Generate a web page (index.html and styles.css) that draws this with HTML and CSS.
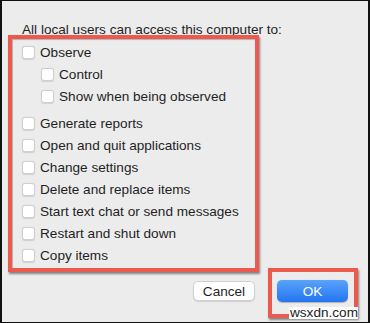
FILE: index.html
```html
<!DOCTYPE html>
<html>
<head>
<meta charset="utf-8">
<link rel="stylesheet" href="styles.css">
</head>
<body>
<div class="frame">
  <div class="heading">All local users can access this computer to:</div>
  <div class="list">
    <div class="row"><span class="box"></span><span>Observe</span></div>
    <div class="row sub"><span class="box"></span><span>Control</span></div>
    <div class="row sub"><span class="box"></span><span>Show when being observed</span></div>
    <div class="group">
      <div class="row"><span class="box"></span><span>Generate reports</span></div>
      <div class="row"><span class="box"></span><span>Open and quit applications</span></div>
      <div class="row"><span class="box"></span><span>Change settings</span></div>
      <div class="row"><span class="box"></span><span>Delete and replace items</span></div>
      <div class="row"><span class="box"></span><span>Start text chat or send messages</span></div>
      <div class="row"><span class="box"></span><span>Restart and shut down</span></div>
      <div class="row"><span class="box"></span><span>Copy items</span></div>
    </div>
  </div>
  <div class="buttons">
    <button class="btn cancel">Cancel</button>
    <div class="ok-mark"><button class="btn ok">OK</button></div>
  </div>
  <div class="watermark">wsxdn.com</div>
</div>
</body>
</html>
```
FILE: styles.css
```css
html, body {
  margin: 0;
  padding: 0;
}
body {
  width: 370px;
  height: 323px;
  overflow: hidden;
  font-family: "Liberation Sans", Arial, sans-serif;
  font-size: 13.6px;
  color: #1f1f1f;
}
.frame {
  position: relative;
  box-sizing: border-box;
  width: 370px;
  height: 323px;
  background: #ececec;
  border-style: solid;
  border-color: #111;
  border-width: 1px 2px 1px 2px;
  padding: 23px 10px 0 6px;
  display: flex;
  flex-direction: column;
}
.heading {
  line-height: 11px;
  height: 11px;
  padding-left: 14px;
  white-space: nowrap;
}
.list {
  box-sizing: border-box;
  width: 251px;
  margin-left: 0;
  border: 4px solid #ea5a4f;
  box-shadow: 1px 2px 2px rgba(0,0,0,0.45), inset 1px 1px 1px rgba(0,0,0,0.25);
  padding: 2px 0 2px 10px;
  display: flex;
  flex-direction: column;
}
.group {
  margin-top: 5px;
  display: flex;
  flex-direction: column;
}
.row {
  height: 22px;
  display: flex;
  align-items: center;
  gap: 5px;
  white-space: nowrap;
}
.row.sub {
  padding-left: 19px;
}
.box {
  box-sizing: border-box;
  width: 13px;
  height: 13px;
  background: #fff;
  border: 1px solid #cfcfcf;
  border-radius: 3px;
  box-shadow: 0 0.5px 1px rgba(0,0,0,0.12);
  flex: none;
}
.buttons {
  margin-top: -4px;
  display: flex;
  justify-content: flex-end;
  align-items: flex-start;
  gap: 13px;
}
.btn {
  font-family: "Liberation Sans", Arial, sans-serif;
  font-size: 13.6px;
  border-radius: 5px;
  padding: 0;
  margin: 0;
  cursor: default;
}
.cancel {
  margin-top: 13px;
  width: 62px;
  height: 20px;
  background: #fff;
  color: #1f1f1f;
  border: 1px solid #d0d0d0;
  box-shadow: 0 1px 1px rgba(0,0,0,0.12);
}
.ok-mark {
  box-sizing: border-box;
  width: 90px;
  height: 50px;
  border: 4px solid #ea5a4f;
  box-shadow: 1px 2px 2px rgba(0,0,0,0.45);
  padding: 8px 6px 0 5px;
}
.ok {
  width: 71px;
  height: 22px;
  color: #fff;
  border: none;
  background: linear-gradient(#5aa3fa, #2375f2);
  box-shadow: 0 0.5px 1px rgba(0,0,0,0.25);
}
.watermark {
  position: absolute;
  right: 10px;
  bottom: 3px;
  background: #fff;
  color: #222;
  font-family: "Liberation Sans", Arial, sans-serif;
  font-size: 13.6px;
  line-height: 12px;
  padding: 0 0 0 1px;
}
```
